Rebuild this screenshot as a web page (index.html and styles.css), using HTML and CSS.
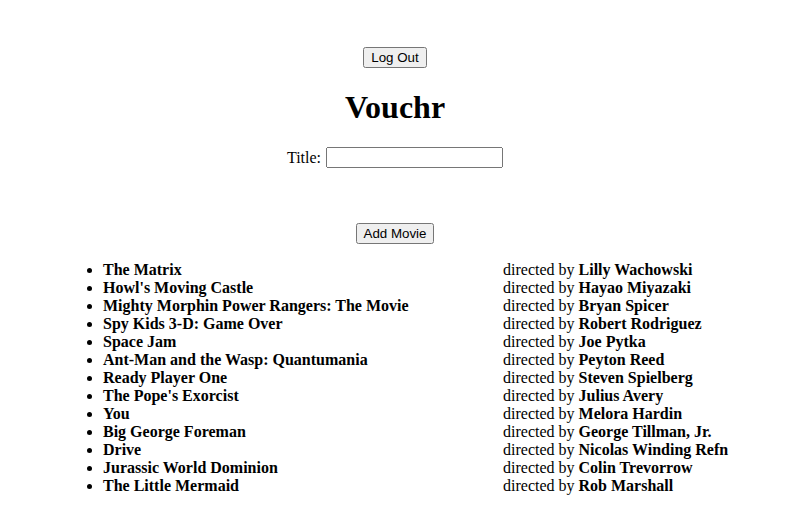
FILE: index.html
```html
<!DOCTYPE html>
<html>
<head>
<meta charset="utf-8">
<title>Vouchr</title>
<link rel="stylesheet" href="styles.css">
</head>
<body>
<div class="page">
  <div class="top"><button class="btn" type="button">Log Out</button></div>
  <h1 class="brand">Vouchr</h1>
  <form class="add-form">
    <div class="field"><label for="title">Title:</label> <input id="title" class="title-input" type="text"></div>
    <div class="actions"><button class="btn" type="button">Add Movie</button></div>
  </form>
  <ul class="movies">
    <li><span class="movie"><b>The Matrix</b></span><span class="dir">directed by <b>Lilly Wachowski</b></span></li>
    <li><span class="movie"><b>Howl's Moving Castle</b></span><span class="dir">directed by <b>Hayao Miyazaki</b></span></li>
    <li><span class="movie"><b>Mighty Morphin Power Rangers: The Movie</b></span><span class="dir">directed by <b>Bryan Spicer</b></span></li>
    <li><span class="movie"><b>Spy Kids 3-D: Game Over</b></span><span class="dir">directed by <b>Robert Rodriguez</b></span></li>
    <li><span class="movie"><b>Space Jam</b></span><span class="dir">directed by <b>Joe Pytka</b></span></li>
    <li><span class="movie"><b>Ant-Man and the Wasp: Quantumania</b></span><span class="dir">directed by <b>Peyton Reed</b></span></li>
    <li><span class="movie"><b>Ready Player One</b></span><span class="dir">directed by <b>Steven Spielberg</b></span></li>
    <li><span class="movie"><b>The Pope's Exorcist</b></span><span class="dir">directed by <b>Julius Avery</b></span></li>
    <li><span class="movie"><b>You</b></span><span class="dir">directed by <b>Melora Hardin</b></span></li>
    <li><span class="movie"><b>Big George Foreman</b></span><span class="dir">directed by <b>George Tillman, Jr.</b></span></li>
    <li><span class="movie"><b>Drive</b></span><span class="dir">directed by <b>Nicolas Winding Refn</b></span></li>
    <li><span class="movie"><b>Jurassic World Dominion</b></span><span class="dir">directed by <b>Colin Trevorrow</b></span></li>
    <li><span class="movie"><b>The Little Mermaid</b></span><span class="dir">directed by <b>Rob Marshall</b></span></li>
  </ul>
</div>
</body>
</html>
```
FILE: styles.css
```css
html, body {
  background: #fff;
  color: #000;
}
body {
  margin: 8px;
  font-family: "Liberation Serif", "Times New Roman", serif;
  font-size: 16px;
}
.page {
  width: 774px;
  text-align: center;
}
.top {
  padding-top: 39px;
}
.btn {
  font-family: "Liberation Sans", Arial, sans-serif;
  font-size: 13.333px;
}
.brand {
  font-size: 32px;
  font-weight: bold;
  margin: 21px 0;
}
.add-form {
  margin: 0;
}
.field {
  height: 21px;
  display: flex;
  justify-content: center;
  align-items: center;
  gap: 5px;
}
.title-input {
  width: 169px;
  height: 15px;
  margin: 0;
  font-size: 13.333px;
}
.actions {
  margin-top: 55px;
}
.movies {
  text-align: left;
  margin: 17px 0 16px 55px;
  padding-left: 40px;
}
.movies li {
  line-height: 18px;
}
.movie {
  display: inline-block;
  width: 400px;
}
```
